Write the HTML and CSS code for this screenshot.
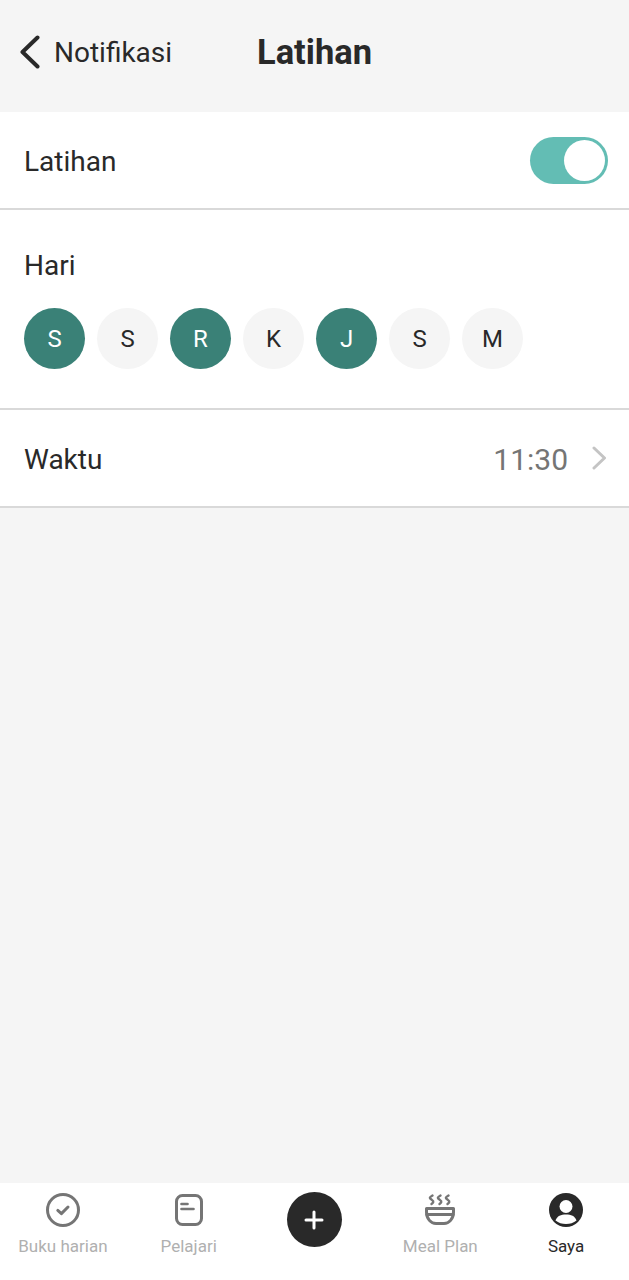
FILE: index.html
```html
<!DOCTYPE html>
<html lang="en">
<head>
    <meta charset="UTF-8">
    <meta name="viewport" content="width=device-width, initial-scale=1.0">
    <title>Latihan</title>
    <link rel="stylesheet" href="styles.css">
</head>
<body>
    <div class="app">
        <header class="topbar">
            <div class="back">
                <svg class="back-icon" width="22" height="34" viewBox="0 0 22 34"><path d="M18.5 2.500 L3.500 17 L18.500 31.500" fill="none" stroke="#292929" stroke-width="4" stroke-linecap="round" stroke-linejoin="round"/></svg>
                <span>Notifikasi</span>
            </div>
            <h1>Latihan</h1>
        </header>

        <section class="row row-toggle">
            <span class="label">Latihan</span>
            <div class="toggle"><div class="knob"></div></div>
        </section>

        <section class="days">
            <div class="label">Hari</div>
            <div class="day-list">
                <div class="day on">S</div>
                <div class="day">S</div>
                <div class="day on">R</div>
                <div class="day">K</div>
                <div class="day on">J</div>
                <div class="day">S</div>
                <div class="day">M</div>
            </div>
        </section>

        <section class="row row-time">
            <span class="label">Waktu</span>
            <div class="time">
                <span class="time-value">11:30</span>
                <svg width="16" height="24" viewBox="0 0 16 24"><path d="M2 2 L12.500 12 L2 22" fill="none" stroke="#c4c4c4" stroke-width="3" stroke-linecap="round" stroke-linejoin="round"/></svg>
            </div>
        </section>

        <nav class="tabbar">
            <div class="tab">
                <svg width="36" height="36" viewBox="0 0 36 36" fill="none" stroke="#757575" stroke-width="3" stroke-linecap="round" stroke-linejoin="round"><circle cx="18" cy="18" r="15.500"/><path d="M12.800 18.400 L16.400 21.600 L23 15"/></svg>
                <span>Buku harian</span>
            </div>
            <div class="tab">
                <svg width="36" height="36" viewBox="0 0 36 36" fill="none" stroke="#757575" stroke-width="3" stroke-linecap="round"><rect x="5.500" y="3.500" width="25" height="29" rx="6"/><path d="M10.500 12 H16.500" stroke-width="2.600"/><path d="M10.500 17 H22.500" stroke-width="2.600"/></svg>
                <span>Pelajari</span>
            </div>
            <div class="tab">
                <div class="add">
                    <svg width="20" height="20" viewBox="0 0 20 20" stroke="#fff" stroke-width="3" stroke-linecap="round"><path d="M10 2 V18"/><path d="M2 10 H18"/></svg>
                </div>
            </div>
            <div class="tab">
                <svg width="36" height="36" viewBox="0 0 36 36" fill="none" stroke="#757575" stroke-width="3" stroke-linecap="round" stroke-linejoin="round"><path d="M4.500 16.500 H31.500 V20 C31.500 27 27 31.500 22 31.500 H14 C9 31.500 4.500 27 4.500 20 Z"/><path d="M5 22.500 H31"/><g stroke-width="2.400"><path d="M10.500 3.500 C7 5.500 7 6 10 8 C12.500 9.500 11 11 9.500 12"/><path d="M18.500 3.500 C15 5.500 15 6 18 8 C20.500 9.500 19 11 17.500 12"/><path d="M26.500 3.500 C23 5.500 23 6 26 8 C28.500 9.500 27 11 25.500 12"/></g></svg>
                <span>Meal Plan</span>
            </div>
            <div class="tab active">
                <svg width="36" height="36" viewBox="0 0 36 36"><circle cx="18" cy="18" r="17" fill="#292929"/><circle cx="18" cy="14.500" r="6.500" fill="#fff"/><path d="M7.500 28.500 C9 24 13 22.500 18 22.500 C23 22.500 27 24 28.500 28.500 C25.500 31 22 32 18 32 C14 32 10.500 31 7.500 28.500 Z" fill="#fff"/></svg>
                <span>Saya</span>
            </div>
        </nav>
    </div>
</body>
</html>
```

FILE: styles.css
```css
* {
    box-sizing: border-box;
}

body {
    margin: 0;
    font-family: "Roboto", "Liberation Sans", sans-serif;
    color: #292929;
    background-color: #f5f5f5;
}

.app {
    display: flex;
    flex-direction: column;
    height: 100vh;
}

.topbar {
    position: relative;
    display: flex;
    align-items: center;
    height: 112px;
    padding: 0 0 8px 19px;
    flex-shrink: 0;
}

.back {
    display: flex;
    align-items: center;
    gap: 13px;
    font-size: 28px;
}

.topbar h1 {
    position: absolute;
    left: 0;
    right: 0;
    top: 30px;
    margin: 0;
    font-size: 34.500px;
    line-height: 44px;
    font-weight: 700;
    text-align: center;
}

.label {
    font-size: 28px;
}

.row {
    display: flex;
    align-items: center;
    justify-content: space-between;
    background-color: #fff;
    border-bottom: 2px solid #d9d9d9;
    padding: 0 21px 0 24px;
    flex-shrink: 0;
}

.row .label {
    margin-top: 3px;
}

.row-toggle {
    height: 98px;
}

.toggle {
    display: flex;
    justify-content: flex-end;
    align-items: center;
    width: 78px;
    height: 47px;
    padding: 3px;
    border-radius: 24px;
    background-color: #63bdb4;
}

.knob {
    width: 41px;
    height: 41px;
    border-radius: 50%;
    background-color: #fff;
}

.days {
    height: 200px;
    padding: 37px 24px 0;
    background-color: #fff;
    border-bottom: 2px solid #d9d9d9;
    flex-shrink: 0;
}

.days .label {
    line-height: 38px;
}

.day-list {
    display: flex;
    gap: 12px;
    margin-top: 23px;
}

.day {
    display: flex;
    align-items: center;
    justify-content: center;
    width: 61px;
    height: 61px;
    border-radius: 50%;
    background-color: #f5f5f5;
    font-size: 24px;
}

.day.on {
    background-color: #3a8177;
    color: #fff;
}

.row-time {
    height: 98px;
}

.time {
    display: flex;
    align-items: center;
    gap: 24px;
    font-size: 30px;
    color: #757575;
}

.time-value {
    margin-top: 2px;
}

.tabbar {
    display: grid;
    grid-template-columns: repeat(5, 1fr);
    height: 97px;
    margin-top: auto;
    background-color: #fff;
    flex-shrink: 0;
}

.tab {
    display: flex;
    flex-direction: column;
    align-items: center;
    padding-top: 9px;
    gap: 8px;
    font-size: 17px;
    color: #b0b0b0;
}

.tab.active {
    color: #292929;
}

.add {
    display: flex;
    align-items: center;
    justify-content: center;
    width: 55px;
    height: 55px;
    border-radius: 50%;
    background-color: #292929;
}
```
